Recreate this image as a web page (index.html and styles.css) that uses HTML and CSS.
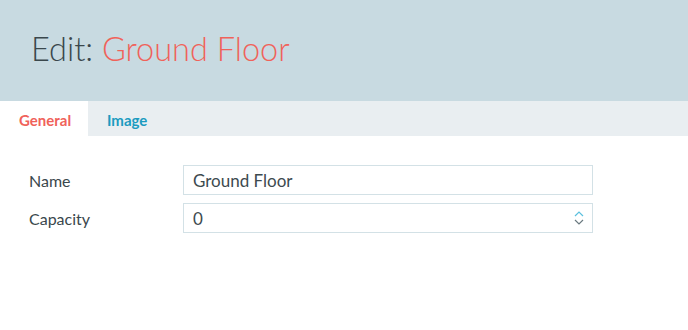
FILE: index.html
```html
<!DOCTYPE html>
<html>

<head>
    <meta charset="utf-8">
    <title>Edit: Ground Floor</title>
    <link rel="stylesheet" href="styles.css">
</head>

<body>
    <header class="page-head">
        <h1>Edit: <span class="name">Ground Floor</span></h1>
    </header>
    <nav class="tabs">
        <a class="tab active">General</a>
        <a class="tab">Image</a>
    </nav>
    <form class="edit-form">
        <div class="row">
            <label>Name</label>
            <div class="field"><input type="text" value="Ground Floor"></div>
        </div>
        <div class="row">
            <label>Capacity</label>
            <div class="field">
                <input type="text" value="0">
                <span class="spin">
                    <svg width="10" height="16" viewBox="0 0 10 16">
                        <polyline points="1,6 5,2 9,6" fill="none" stroke="#5bc0de" stroke-width="1.2"/>
                        <polyline points="1,10 5,14 9,10" fill="none" stroke="#6b7a80" stroke-width="1.2"/>
                    </svg>
                </span>
            </div>
        </div>
    </form>
</body>

</html>
```

FILE: styles.css
```css
html {
    font-family: Lato, 'Open Sans', sans-serif;
}

body {
    margin: 0;
    color: #37454b;
}

.page-head {
    background-color: #c8dae1;
    height: 101px;
    display: flex;
    align-items: center;
    padding-left: 31px;
}

.page-head h1 {
    margin: 0 0 5px;
    font-size: 32.5px;
    font-weight: 300;
    color: #3a474c;
}

.page-head .name {
    color: #f0625a;
}

.tabs {
    display: flex;
    background-color: #e9eef1;
    height: 35px;
}

.tab {
    display: flex;
    align-items: center;
    padding: 2px 19px 0;
    font-size: 15px;
    font-weight: 700;
    color: #1b9bc0;
}

.tab.active {
    background-color: #fff;
    color: #f0625a;
    width: 50px;
}

.edit-form {
    padding: 29px 0 0 29px;
}

.row {
    display: flex;
    align-items: center;
    margin-bottom: 8px;
}

.row label {
    width: 154px;
    font-size: 16px;
    color: #3a474c;
}

.field {
    position: relative;
    width: 410px;
}

.field input {
    box-sizing: border-box;
    display: block;
    width: 100%;
    height: 30px;
    border: 1px solid #d3e1e6;
    padding: 0 9px;
    font-family: inherit;
    font-size: 17px;
    color: #3d4a4f;
    outline: none;
}

.spin {
    position: absolute;
    right: 9px;
    top: 7px;
    display: flex;
}
```
